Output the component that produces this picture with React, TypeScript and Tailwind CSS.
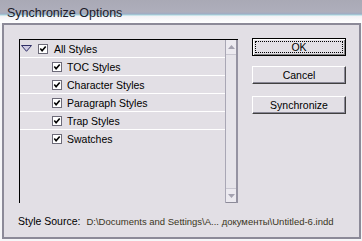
import { ReactNode } from 'react'

function Check() {
  return (
    <span className="w-[10px] h-[10px] border border-[#6c6a78] bg-white flex items-center justify-center shrink-0">
      <svg width="8" height="8" viewBox="0 0 8 8">
        <path d="M1.3 3.6 L3.1 5.7 L6.7 1.4" fill="none" stroke="#000" strokeWidth="1.6" />
      </svg>
    </span>
  )
}

function Row({ label, child = false, last = false, children }: { label: string; child?: boolean; last?: boolean; children?: ReactNode }) {
  return (
    <div className={`h-[18px] flex items-center ${last ? '' : 'border-b border-white'} ${child ? 'pl-[32px]' : 'pl-[1px]'}`}>
      {children}
      <Check />
      <span className={child ? 'ml-[5px]' : 'ml-[6px]'}>{label}</span>
    </div>
  )
}

function Btn({ label, primary = false }: { label: string; primary?: boolean }) {
  return (
    <div
      className={`h-[18px] w-[94px] flex items-center justify-center ${
        primary
          ? 'border border-black shadow-[inset_1px_1px_0_#fff,inset_-1px_-1px_0_#808080] outline-1 outline-dotted outline-black outline-offset-[-4px]'
          : 'border border-t-white border-l-white border-r-[#404040] border-b-[#404040] shadow-[inset_-1px_-1px_0_#8a8896]'
      }`}
    >
      {label}
    </div>
  )
}

export default function App() {
  return (
    <div className="w-[362px] h-[241px] bg-[#f6f6f8] overflow-hidden text-black text-[10.5px] leading-[12px] font-['Liberation_Sans',Arial,sans-serif]">
      {/* title bar */}
      <div className="h-[23px] flex items-end pl-[7px] pb-[3px] bg-[linear-gradient(to_bottom,#a9a9b5_0px,#aeaebb_12px,#9eabc4_14px,#a6d9e0_15px,#f2f2f6_16px,#ffffff_23px)]">
        <span className="text-[12.5px] leading-[14px] text-[#1c1c2a]">Synchronize Options</span>
      </div>

      {/* frame */}
      <div className="ml-[2px] mr-[1px] h-[216px] border-2 border-[#8c8a98] bg-[#e2dfe5]">
        <div className="flex pl-[15px] pt-[14px]">
          {/* list */}
          <div className="w-[219px] h-[164px] border-l border-t border-black flex">
            <div className="flex-1">
              <Row label="All Styles">
                <svg width="11" height="7" viewBox="0 0 11 7" className="mr-[6px]">
                  <polygon points="0.5,0.5 10.5,0.5 5.5,6.3" fill="#cfcbe2" stroke="#2e2e66" strokeWidth="1" />
                </svg>
              </Row>
              <Row label="TOC Styles" child />
              <Row label="Character Styles" child />
              <Row label="Paragraph Styles" child />
              <Row label="Trap Styles" child />
              <Row label="Swatches" child last />
            </div>
            {/* scrollbar */}
            <div className="w-[13px] flex flex-col border-l border-l-[#a9a7b5] border-r-2 border-r-[#9593a2]">
              <div className="h-[15px] bg-[#eceaf0] border-b border-[#c9c7d1] flex items-center justify-center">
                <svg width="7" height="4" viewBox="0 0 7 4">
                  <polygon points="0,4 7,4 3.5,0" fill="#a4a2b0" />
                </svg>
              </div>
              <div className="flex-1 bg-[#e6e4ea]" />
              <div className="h-[15px] bg-[#eceaf0] border-t border-[#c9c7d1] border-b border-b-[#8c8a98] flex items-center justify-center">
                <svg width="7" height="4" viewBox="0 0 7 4">
                  <polygon points="0,0 7,0 3.5,4" fill="#a4a2b0" />
                </svg>
              </div>
            </div>
          </div>

          {/* buttons */}
          <div className="ml-[14px] -mt-[1px] flex flex-col gap-[10px]">
            <Btn label="OK" primary />
            <Btn label="Cancel" />
            <div className="mt-[2px]">
              <Btn label="Synchronize" />
            </div>
          </div>
        </div>

        <div className="pl-[14px] mt-[12px] flex items-baseline gap-[6px] whitespace-nowrap">
          <span>Style Source:</span>
          <span className="text-[9.5px] text-[#3a3522]">D:\Documents and Settings\A... документы\Untitled-6.indd</span>
        </div>
      </div>
    </div>
  )
}
